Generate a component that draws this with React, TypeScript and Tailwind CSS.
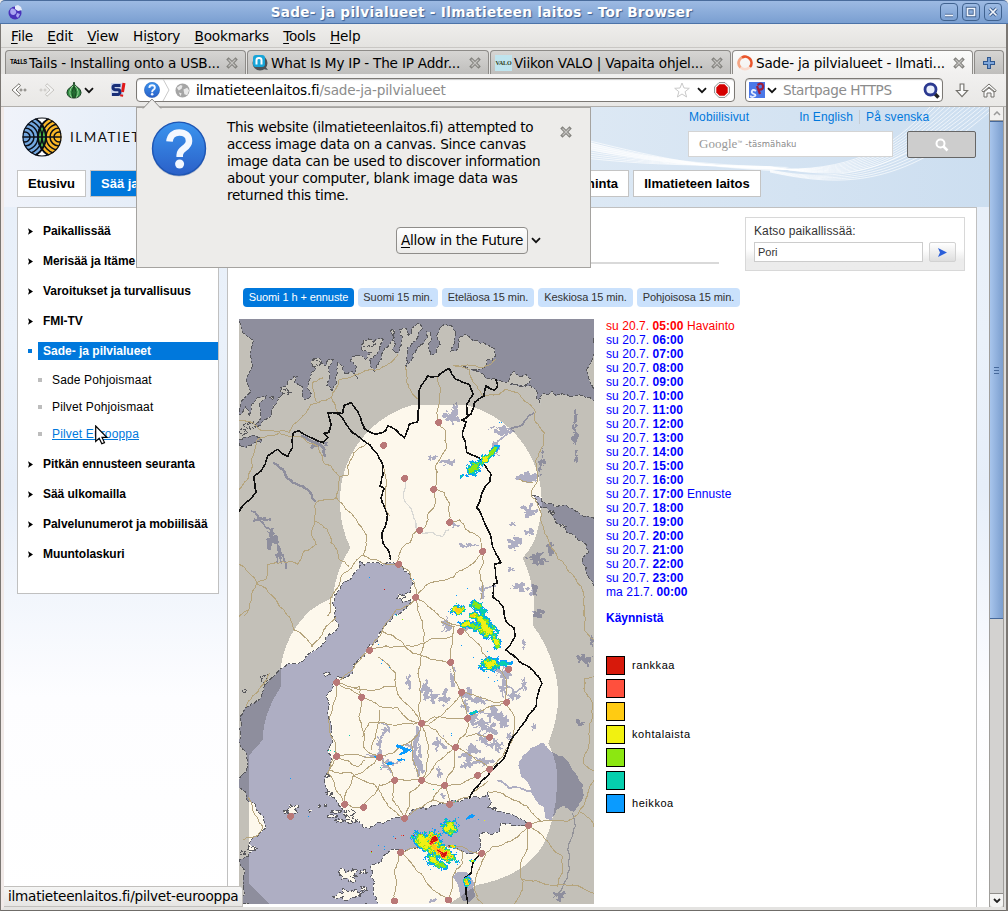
import React from "react";

type P = [number, number];

const seeded = (seed: number) => {
  let s = seed;
  return () => {
    s = (s * 1664525 + 1013904223) % 4294967296;
    return s / 4294967296;
  };
};

// "x,y x,y ..." -> points; the offset moves coordinates of the southern sheet
const pts = (s: string, dy = 0): P[] =>
  s.trim().split(/\s+/).map((p) => {
    const [x, y] = p.split(",").map(Number);
    return [x, y + dy] as P;
  });

const S = 882;

// Midpoint displacement gives the coast and the roads their irregular course
function rough(points: P[], amp: number, seed: number, closed = false, depth = 3): string {
  const rnd = seeded(seed);
  let list = closed ? [...points, points[0]] : points;
  for (let d = 0; d < depth; d++) {
    const out: P[] = [list[0]];
    for (let i = 1; i < list.length; i++) {
      const [ax, ay] = list[i - 1];
      const [bx, by] = list[i];
      const len = Math.hypot(bx - ax, by - ay);
      if (len > 7) {
        const k = (rnd() - 0.5) * amp * len;
        out.push([(ax + bx) / 2 - ((by - ay) / len) * k, (ay + by) / 2 + ((bx - ax) / len) * k]);
      }
      out.push(list[i]);
    }
    list = out;
  }
  return "M" + list.map(([x, y]) => `${x.toFixed(1)} ${y.toFixed(1)}`).join("L") + (closed ? "Z" : "");
}

function blob(cx: number, cy: number, rx: number, ry: number, seed: number, low = 0.4): string {
  const rnd = seeded(seed * 7919 + 13);
  const out: P[] = [];
  for (let i = 0; i < 20; i++) {
    const a = (i / 20) * Math.PI * 2;
    const r = low + rnd() * (1.25 - low);
    out.push([cx + Math.cos(a) * rx * r, cy + Math.sin(a) * ry * r]);
  }
  return rough(out, 0.8, seed, true, 2);
}

const northSea = pts(
  "9,9 1074,9 1074,255 1050,245 1030,236 1000,240 985,235 960,240 945,225 918,235 912,262 905,232 880,208 860,212 820,205 845,207 880,200 884,190 870,176 848,180 832,165 822,185 812,198 780,190 752,188 740,172 702,162 680,150 742,155 752,132 780,120 776,102 750,86 720,72 690,55 672,62 665,100 645,105 655,70 660,45 650,32 630,26 610,36 602,60 612,85 600,112 584,115 584,50 572,48 550,90 528,130 508,158 512,120 530,80 548,50 560,38 545,22 530,35 515,60 505,35 490,42 495,80 488,110 470,100 475,70 466,38 470,75 445,100 430,135 415,165 400,130 430,95 442,70 425,68 400,80 376,85 380,105 405,110 390,130 350,122 342,135 360,150 365,190 345,165 325,175 322,150 305,140 300,200 290,225 270,210 280,180 292,130 275,128 270,150 252,128 228,128 240,160 222,190 225,240 205,250 195,210 175,200 185,180 165,190 150,210 135,215 140,235 122,262 105,300 90,310 60,335 75,290 90,240 65,245 45,280 40,300 28,270 9,295",
);
const fjord = pts("9,372 40,362 70,365 78,378 50,385 30,395 9,390");
const baltic: P[] = [
  ...pts("370,735 385,748 400,738 440,748 470,740 500,750 520,775 525,830 508,833 488,838 500,858 525,850 515,870 480,895"),
  ...pts(
    "470,18 430,70 425,90 395,112 385,140 350,165 350,190 305,200 288,240 270,262 275,310 285,370 287,400 275,425 286,450 275,490 270,530 300,570 325,600 345,640 370,635 385,655 405,650 440,640 500,625 530,600 570,598 610,580 650,570 700,565 755,545 765,580 752,592 790,605 830,615 860,630 878,645 850,646 795,640 790,665 750,665 728,680 725,722 670,722 640,705 590,712 530,715 490,720 440,745 405,765 404,800 412,840 430,884 95,884 9,884 9,750 35,740 58,718 40,700 58,680 90,650 82,620 60,590 30,548 9,535 9,395 16,380 14,330 32,290 80,245 110,200 160,160 210,140 245,115 270,82 306,42 295,10",
    S,
  ),
  ...pts("300,880 290,860 312,820 325,795 350,778 365,760"),
];
const whiteSea = pts("888,538 930,562 960,572 1000,575 1040,600 1074,607 1074,808 1052,772 1040,745 1058,705 1040,675 1010,655 980,632 950,598 908,570");
const ladoga = pts("848,455 880,420 900,408 925,400 955,430 1000,460 1020,490 1042,525 1030,580 1012,605 985,588 960,605 948,635 932,628 922,590 885,540 855,500", S);
const peipus = pts("650,800 665,785 695,788 712,812 718,860 700,876 680,872 668,835", S);

const coverage =
  "M312 560A298 298 0 0 1 530 267H690A298 298 0 0 1 905 640Q895 690 860 725Q890 790 895 860L890 927Q935 985 955 1062Q985 1160 937 1282Q968 1340 963 1410Q960 1500 925 1580Q870 1680 722 1707L640 1764H100L40 1702V1317L80 1272Q82 1190 135 1112V1050Q150 950 225 882Q255 860 290 845Q300 760 343 695Q312 630 312 560Z";

const lakes: number[][] = [
  [645, 300, 28, 26], [662, 275, 13, 22], [640, 440, 28, 16], [585, 425, 22, 10], [800, 342, 36, 14], [780, 400, 13, 26],
  [700, 688, 32, 10], [655, 628, 16, 11], [835, 680, 22, 28], [880, 585, 24, 22], [880, 648, 16, 14], [905, 728, 34, 22],
  [945, 695, 13, 22], [830, 625, 16, 9], [825, 760, 13, 8], [850, 815, 42, 11], [895, 825, 18, 18], [1018, 300, 9, 24], [1019, 350, 8, 42],
  [1020, 420, 8, 20], [880, 480, 38, 16], [918, 435, 11, 36], [108, 670, 16, 36], [130, 715, 12, 28], [75, 610, 26, 7], [245, 385, 32, 10],
  [740, 830, 11, 24], [905, 893, 22, 13], [630, 925, 24, 24], [700, 935, 28, 13], [865, 985, 10, 18], [1045, 1033, 30, 20], [1030, 1222, 16, 12],
  [893, 1232, 10, 11], [862, 1105, 11, 24], [518, 1095, 8, 26], [570, 1120, 16, 28], [590, 1145, 28, 18], [625, 1150, 16, 28], [650, 1080, 8, 32],
  [700, 1140, 26, 24], [735, 1155, 26, 13], [690, 1170, 14, 20], [800, 1070, 28, 18], [800, 1120, 16, 28], [830, 1142, 16, 11], [770, 1195, 40, 24],
  [740, 1225, 34, 16], [800, 1215, 24, 26], [735, 1265, 24, 28], [770, 1285, 24, 18], [700, 1310, 32, 26], [740, 1335, 32, 18], [690, 1345, 18, 16],
  [610, 1280, 22, 26], [545, 1265, 10, 48], [542, 1330, 14, 44], [555, 1360, 12, 20], [450, 1240, 16, 13], [430, 1285, 10, 32], [420, 1320, 34, 10],
  [470, 1340, 34, 9], [445, 1352, 20, 18], [520, 1290, 24, 9], [610, 1370, 10, 22], [620, 1440, 10, 11], [790, 1295, 11, 24], [845, 1140, 10, 11],
  [820, 1260, 11, 13], [975, 1738, 30, 18], [590, 1755, 13, 9], [1067, 970, 8, 24], [885, 490, 22, 9], [760, 1240, 30, 20], [715, 1205, 16, 20],
];

const islands: number[][] = [
  [168, 1480, 20, 16], [150, 1487, 8, 6], [335, 1678, 34, 18], [380, 1668, 12, 7], [345, 1735, 46, 16], [385, 1718, 10, 8], [300, 1487, 14, 5], [290, 1500, 18, 5],
  [340, 1492, 18, 10], [345, 1512, 18, 9], [310, 1514, 11, 5], [48, 1598, 14, 8], [272, 1074, 10, 6], [494, 842, 13, 9], [85, 1088, 14, 12], [275, 1378, 8, 5],
  [20, 1610, 8, 6], [280, 1432, 9, 6], [222, 1485, 4, 4], [250, 1470, 4, 4], [268, 1468, 4, 4], [775, 1478, 6, 4], [25, 1125, 6, 5],
  [402, 80, 20, 14], [240, 140, 14, 12], [470, 45, 6, 8], [45, 330, 20, 10], [22, 350, 10, 10], [150, 228, 14, 12], [108, 245, 6, 5],
  [948, 590, 8, 6], [980, 630, 10, 6],
];

const roads: P[][] = [
  pts("605,182 612,240 607,318 630,345 632,390 612,430 598,450 596,520 598,560 575,595 572,625 550,643 530,655 522,680 498,695 485,735 487,745"),
  pts("592,520 625,530 641,560 640,618 670,612 690,640 735,670 739,706 742,740 730,770 738,830 735,850"),
  pts("739,706 700,750 650,785 600,795 560,820 538,843 535,800 520,765 487,745 430,735 382,718 350,750 320,775 285,845 285,880 275,900"),
  pts("400,378 370,395 345,430 335,480 312,482 300,545 240,560 235,615 225,650 240,685 205,705 185,745 95,745 90,790 62,802 25,900"),
  pts("9,745 62,802 110,840 155,900"),
  pts("300,545 330,580 365,620 390,655 380,718"),
  pts("235,615 275,640 285,680 310,730 340,752"),
  pts("312,482 285,450 262,440 245,390 190,360 130,350 60,375 45,430 35,490 9,520"),
  pts("9,315 50,320 75,345 160,350 200,300 225,265 285,245 310,190 350,180 430,160 465,140 485,115"),
  pts("245,260 230,200 262,185"), pts("285,245 305,290"), pts("508,150 512,200 545,250"),
  pts("650,148 700,160 712,200 725,215 740,240 790,235 805,222 845,230 865,255 895,280 900,320 925,350 910,410 900,450 905,480 885,540 915,590 925,650 950,700 990,750 1035,810 1042,900"),
  pts("650,148 740,155 780,130"), pts("440,445 450,530 460,600"), pts("892,500 850,490"),
  pts("150,10 175,60 228,110 262,60 300,20", S), pts("9,20 35,0", S),
  pts("538,-40 545,0 560,50 560,115 548,180 555,260 556,340", S),
  pts("538,-40 590,0 610,20 672,45 710,85 740,130 770,160 800,190 812,240 810,277 760,290 695,325", S),
  pts("538,-30 480,0 440,60 400,120 350,180 302,218 350,232 480,230 530,300 556,340", S),
  pts("440,65 490,90 530,130 570,140 643,157 650,100 655,50 615,35", S),
  pts("643,157 655,200 677,247 690,290 695,325 690,370 658,412 655,470 626,525 640,583", S),
  pts("400,115 500,110 560,100 590,85 650,80", S),
  pts("425,140 480,190 480,230", S), pts("302,218 290,300 280,360 300,438 275,490 300,540 326,583 382,592", S),
  pts("302,218 376,262 430,290 485,292 520,330 556,340", S), pts("376,262 370,230 350,232", S),
  pts("376,262 368,320 380,360 382,410 430,442 475,510 470,570 505,625", S),
  pts("556,340 510,340 400,338 380,380", S), pts("300,438 430,442 470,430 540,380 556,340", S),
  pts("556,340 575,400 578,440 556,510 520,550 505,625", S), pts("556,340 610,320 695,325", S),
  pts("556,340 600,360 658,412 600,460 556,510 475,510 430,525 382,592", S),
  pts("430,442 350,500 326,583", S), pts("300,438 280,480 350,490 410,520 440,560 470,600 505,625", S),
  pts("677,247 740,265 811,277 835,320 830,380 800,440 760,478 725,496 680,520 626,525 556,510", S),
  pts("658,412 720,450 760,478", S), pts("760,382 720,370 690,380", S), pts("505,625 560,590 590,570 640,583 700,560 755,515", S),
  pts("677,247 630,300 580,340", S), pts("590,570 600,550 626,525", S), pts("525,390 530,450 556,510", S), pts("430,300 420,370 405,420", S),
  pts("755,545 800,550 850,575 890,610 915,635 878,645 830,690 770,710 740,750 720,800 715,840 740,882", S),
  pts("915,635 990,635 1030,605 1060,530 1074,510", S), pts("878,645 862,740 860,840 835,882", S),
  pts("878,645 940,700 980,740 965,830", S), pts("862,808 940,825 1074,850", S), pts("1030,605 1060,625 1074,650", S),
  pts("1074,200 1045,205 1045,240 1070,290 1060,400 1042,460 1074,480", S), pts("493,727 475,780 480,830 475,880", S),
  pts("493,727 540,780 590,840 637,870 650,800 680,760 680,725 640,710", S), pts("493,727 560,710 640,712 736,730", S),
  pts("1045,0 1045,60 1074,90", S), pts("20,690 60,680 80,650 50,600 35,560", S), pts("30,290 75,230 100,190", S), pts("300,438 365,470 385,450", S),
];

const borders: P[][] = [
  pts("9,588 60,530 55,480 75,465 95,420 125,400 155,422 170,395 172,350 190,345 215,360 262,380 275,365 265,352 278,350 286,325 276,290 302,290 320,292 325,268 345,260 360,280 385,338 420,355 448,345 455,330 480,342 505,364 520,325 545,318 548,230 575,180 605,182 640,158 660,190 700,205 712,235 692,265 692,295 705,295 715,260 745,240 750,210 775,222 785,210 780,190"),
  pts("302,290 345,345 400,385 440,445 432,510 445,518 435,545 455,598 438,650 440,680 455,700 463,733"),
  [
    ...pts("705,295 678,312 690,317 680,360 692,408 728,425 765,475 762,495 722,575 755,640 795,740 775,745 785,800 772,805 772,845 800,870"),
    ...pts("803,0 810,35 835,55 838,75 810,120 850,155 890,180 918,220 900,290 870,330 810,430 770,480 735,515 700,568", S),
  ],
  pts("728,736 715,750 705,790 685,805 690,850 695,882", S),
];

const cities: P[] = [
  ...pts("607,319 442,388 505,487 592,520 550,643 640,619 739,706 487,745 538,844"),
  ...pts("673,64 400,121 643,157 817,178 301,217 376,262 676,247 811,277 694,325 556,340 760,382 658,412 301,439 430,442 475,511 556,511 760,478 725,496 626,526 325,583 382,592 163,619 505,625 640,583 877,646 493,727 736,730 475,873 637,870", S),
];

const RAIN = ["#0a9bff", "#08cfae", "#8ce614", "#f0f014", "#ffc814", "#ff503c", "#d2140a"];

// x, y, rx, ry, rotation in degrees, strongest class
const cells: number[][] = [
  [745, 428, 20, 13, -48, 3], [712, 455, 28, 18, -50, 2], [768, 405, 22, 11, -55, 2], [782, 392, 14, 5, -30, 0], [676, 480, 9, 5, -50, 1],
  [665, 880, 23, 15, 0, 4], [722, 868, 22, 15, 30, 2], [740, 884, 16, 8, 20, 1], [708, 898, 16, 9, 0, 4],
  [688, 923, 20, 12, 0, 3], [735, 910, 34, 16, 40, 3], [750, 938, 38, 24, 35, 3], [715, 930, 18, 12, 30, 2], [780, 975, 18, 13, 60, 3], [780, 990, 12, 8, 0, 2],
  [762, 1042, 32, 20, -5, 3], [800, 1042, 24, 9, 0, 1], [638, 1532, 24, 24, -20, 3], [652, 1589, 9, 6, 0, 4],
  [556, 1570, 32, 22, 30, 3], [565, 1585, 28, 18, 20, 3], [605, 1603, 60, 22, 30, 4], [590, 1568, 24, 24, 20, 6], [622, 1612, 32, 16, 35, 6],
  [590, 1632, 24, 16, 30, 3], [616, 1648, 18, 11, 30, 2],
  [692, 1695, 11, 16, 20, 4], [705, 1634, 10, 4, 0, 3], [712, 1189, 12, 5, -20, 1], [500, 1296, 26, 5, 20, 0], [505, 1306, 22, 4, -25, 0], [462, 1340, 12, 3, 0, 0],
  [703, 1500, 16, 5, -25, 0], [492, 1330, 10, 4, 0, 0], [420, 1322, 10, 3, 0, 0],
];

const specks: number[][] = [
  [398, 784, 0], [444, 818, 6], [532, 788, 0], [692, 815, 0], [790, 317, 0], [795, 319, 0], [790, 389, 0], [660, 836, 0], [660, 860, 1], [480, 898, 1], [478, 893, 0], [498, 908, 2],
  [425, 985, 0], [437, 1032, 0], [435, 1040, 0], [460, 1054, 0], [676, 987, 0], [712, 1024, 0], [752, 1004, 0], [757, 1082, 0], [775, 1095, 0], [783, 1092, 0],
  [338, 1256, 1], [644, 1257, 0], [646, 1250, 0], [162, 1387, 0], [216, 1499, 0], [432, 1352, 1], [590, 1420, 1], [478, 1567, 6], [494, 1556, 5], [502, 1556, 6], [470, 1561, 0],
  [425, 1587, 0], [444, 1591, 0], [445, 1600, 0], [404, 1604, 6], [406, 1607, 2], [745, 1513, 3], [658, 1506, 0], [667, 1504, 0], [553, 1554, 5], [530, 1558, 6], [588, 1537, 0],
  [605, 1551, 4], [275, 1301, 1], [283, 1301, 1], [295, 1305, 1], [582, 1660, 0], [656, 1454, 1], [640, 1591, 6], [725, 1508, 0],
];

// Each 3x3 pixel keeps the strongest class of the cells that overlap it
function rainPixels(): string[] {
  const grid = new Map<string, number>();
  const put = (x: number, y: number, c: number) => {
    const key = `${Math.round(x / 3) * 3} ${Math.round(y / 3) * 3}`;
    grid.set(key, Math.max(grid.get(key) ?? 0, c));
  };
  cells.forEach(([cx, cy, rx, ry, rot, max], n) => {
    const rnd = seeded(n * 977 + 5);
    const a = (rot * Math.PI) / 180;
    const R = Math.max(rx, ry) + 6;
    const ph = rnd() * 6;
    for (let y = -R; y <= R; y += 3)
      for (let x = -R; x <= R; x += 3) {
        const u = (x * Math.cos(a) + y * Math.sin(a)) / rx;
        const v = (-x * Math.sin(a) + y * Math.cos(a)) / ry;
        const wave = Math.sin(x / 4.5 + ph) * Math.cos(y / 5 + ph * 2) * 0.26;
        const d = Math.hypot(u, v) + (rnd() - 0.5) * 0.4 + wave;
        if (d < 1) put(cx + x, cy + y, Math.max(0, Math.min(max, Math.floor((1 - d) * (max + 3)))));
      }
  });
  specks.forEach(([x, y, c]) => put(x, y, c));
  const out = RAIN.map(() => "");
  grid.forEach((c, key) => {
    out[c] += `M${key}h3v3h-3z`;
  });
  return out;
}

function RadarMap() {
  const north = rough(northSea, 0.45, 3, true);
  const sea = rough(baltic, 0.4, 11, true);
  const white = rough(whiteSea, 0.45, 21, true);
  const isl = islands.map(([x, y, a, b], i) => blob(x, y, a, b, i + 200)).join("");
  return (
    <svg viewBox="9 9 1065 1755" className="block h-[585px] w-[355px] shrink-0" shapeRendering="crispEdges">
      <rect x="9" y="9" width="1065" height="1755" fill="#fdf8ec" />
      <g fill="#aeaec3">
        {lakes.map(([x, y, a, b], i) => (
          <path key={i} d={blob(x, y, a, b, i + 1, 0.12)} />
        ))}
        <path d={rough(ladoga, 0.3, 31, true)} />
        <path d={rough(peipus, 0.15, 32, true)} />
      </g>
      <g fill="none" stroke="#aeaec3" strokeWidth="5">
        <path d={rough(pts("112,440 150,480 200,510 238,558"), 0.3, 40)} strokeWidth="7" />
        <path d={rough(pts("770,400 800,365 820,340 870,310 895,290"), 0.3, 41)} />
        <path d={rough(pts("785,510 820,535 870,542 910,548", S), 0.3, 42)} />
        <path d={rough(pts("45,585 80,620 105,660 125,700 150,760"), 0.4, 43)} />
        <path d={rough(pts("195,362 225,375 265,400 270,420"), 0.4, 44)} strokeWidth="8" />
        <path d={rough(pts("740,850 745,820 780,810"), 0.4, 45)} />
        <path d={rough(pts("770,180 800,195 830,250 860,225", S), 0.5, 48)} />
        <path d={rough(pts("425,340 460,355 430,390 425,440 465,490", S), 0.5, 49)} />
        <path d={rough(pts("545,350 535,400 548,450 545,500", S), 0.5, 50)} strokeWidth="9" />
      </g>
      <g fill="none" stroke="#d8d8d4" strokeWidth="3.5">
        <path d={rough(pts("505,487 502,545 530,590 540,635 560,652 620,662 640,640"), 0.25, 46)} />
        <path d={rough(pts("1010,610 1018,650 995,720 980,830 960,860", S), 0.25, 47)} stroke="#b4b4bc" />
      </g>
      <g fill="#aeaec3" stroke="#fffdf4" strokeWidth="6">
        <path d={north} /><path d={rough(fjord, 0.4, 8, true)} /><path d={sea} /><path d={white} />
      </g>
      <g fill="#aeaec3" stroke="#5c5c62" strokeWidth="3" strokeDasharray="13 4 7 6">
        <path d={north} /><path d={rough(fjord, 0.4, 8, true)} /><path d={sea} /><path d={white} />
        <path d={isl} fill="#fdf8ec" />
      </g>
      <path d={`M9 9H1074V1764H9Z${coverage}`} fill="#505050" fillOpacity=".33" fillRule="evenodd" />
      <g fill="none" stroke="#b5a47c" strokeWidth="3">
        {roads.map((r, i) => (
          <path key={i} d={rough(r, 0.22, i + 60)} />
        ))}
      </g>
      <g fill="none" stroke="#111" strokeWidth="4.8">
        {borders.map((r, i) => (
          <path key={i} d={rough(r, 0.14, i + 90)} />
        ))}
      </g>
      {rainPixels().map((d, i) => (
        <path key={i} d={d} fill={RAIN[i]} />
      ))}
      <g fill="#b97877">
        {cities.map(([x, y], i) => (
          <path key={i} d={`M${x - 4} ${y - 10}h9l6 6v8l-6 6h-9l-6 -6v-8z`} />
        ))}
      </g>
    </svg>
  );
}

const CloseX = () => (
  <svg viewBox="0 0 12 12" className="h-3 w-3 shrink-0">
    <path d="M2.5 2.5 9.5 9.5M9.5 2.5 2.5 9.5" stroke="#83827e" strokeWidth="3.2" strokeLinecap="square" />
    <path d="M2.5 2.5 9.5 9.5M9.5 2.5 2.5 9.5" stroke="#c4c3c0" strokeWidth="1.2" />
  </svg>
);

const Chevron = () => (
  <svg viewBox="0 0 10 7" className="h-[7px] w-[10px] shrink-0">
    <path d="M1 1.2 5 5.2 9 1.2" fill="none" stroke="#111" strokeWidth="1.8" />
  </svg>
);

const Question = ({ cls }: { cls: string }) => (
  <svg viewBox="0 0 56 56" className={cls}>
    <defs>
      <linearGradient id="qg" x1="0" y1="0" x2="0" y2="1">
        <stop offset="0" stopColor="#3a94ee" />
        <stop offset="1" stopColor="#2b60c8" />
      </linearGradient>
    </defs>
    <circle cx="28" cy="28.6" r="27" fill="#8a98b4" opacity=".6" />
    <circle cx="28" cy="27.6" r="26.5" fill="url(#qg)" stroke="#1d55b4" strokeWidth="1.4" />
    <path d="M18.500 20.500c.5-5.500 4-9 9.700-9 6 0 9.800 3.400 9.800 8.400 0 7.400-9.300 7.600-9.300 14v2" fill="none" stroke="#f4f8ff" strokeWidth="6.600" />
    <circle cx="28.600" cy="43" r="4.500" fill="#f4f8ff" />
  </svg>
);

const Tab = ({ icon, children, cls }: { icon: React.ReactNode; children: string; cls: string }) => (
  <div className={`flex h-[24px] items-center rounded-t-[4px] border border-b-0 border-[#8d8b88] pl-1 pr-[7px] pt-px ${cls}`}>
    <span className="flex w-[19px] shrink-0 items-center">{icon}</span>
    <span className="flex-1 whitespace-pre text-[13.600px] tracking-[-.2px]">{children}</span>
    <CloseX />
  </div>
);

const idle = "bg-gradient-to-b from-[#d6d5d3] to-[#bfbebc]";

const WinButton = ({ d }: { d: string }) => (
  <span className="flex h-[18px] w-[18px] items-center justify-center rounded-[4px] border border-[#40628f] bg-gradient-to-b from-[#9dbbe4] to-[#7ba0d2]">
    <svg viewBox="0 0 12 12" className="h-3 w-3">
      <path d={d} fill="none" stroke="#3e5f8e" strokeWidth="3.400" />
      <path d={d} fill="none" stroke="#f2f6fc" strokeWidth="1.700" />
    </svg>
  </span>
);

const Menu = ({ a = "", u, b }: { a?: string; u: string; b: string }) => (
  <span>
    {a}
    <span className="underline decoration-1 underline-offset-2">{u}</span>
    {b}
  </span>
);

const Side = ({ children }: { children: string }) => (
  <div className="flex h-[30px] items-center pl-[10px] text-black">
    <svg viewBox="0 0 5 7" className="mr-[10px] h-[7px] w-[5px]">
      <path d="M0 .2 5 3.500 0 6.800 1 3.500Z" fill="#000" />
    </svg>
    <b className="whitespace-nowrap tracking-[-.03px]">{children}</b>
  </div>
);

const Sub = ({ children, cls = "" }: { children: string; cls?: string }) => (
  <div className="flex h-[27px] items-center pl-5">
    <span className="mr-[10px] h-1 w-1 bg-[#bdbdbd]" />
    <span className={`tracking-[.15px] ${cls}`}>{children}</span>
  </div>
);

const Logo = () => (
  <svg viewBox="0 0 40 40" className="h-10 w-10">
    <defs>
      <clipPath id="disc"><circle cx="20" cy="20" r="19.500" /></clipPath>
    </defs>
    <g clipPath="url(#disc)" fill="none" stroke="#0b0f18" strokeWidth="1.500">
      <rect width="40" height="40" fill="#fff" stroke="none" />
      <circle cx="3" cy="20" r="21" fill="#72a7e0" />
      <circle cx="37" cy="20" r="21" fill="#fbb726" />
      <path d="M20 8Q28 20 20 32Q12 20 20 8Z" fill="#4cb848" />
      {[5, 9, 13, 17, 21].map((r) => (
        <React.Fragment key={r}>
          <circle cx="3" cy="20" r={r} /><circle cx="37" cy="20" r={r} />
        </React.Fragment>
      ))}
      <path d="M0 20H40" />
    </g>
    <circle cx="20" cy="20" r="19" fill="none" stroke="#0b0f18" strokeWidth="1.200" />
  </svg>
);

const hours = ["05", "06", "07", "08", "09", "10", "11", "12", "13", "14", "15", "16", "17", "18", "19", "20", "21", "22", "23", "00"];

const legend: [string, string][] = [
  ["bg-[#d7190b]", "rankkaa"], ["bg-[#ff503d]", ""], ["bg-[#ffcb12]", ""], ["bg-[#f1f111]", "kohtalaista"],
  ["bg-[#8ce711]", ""], ["bg-[#05cfae]", ""], ["bg-[#0a9bff]", "heikkoa"],
];

const Pill = ({ children, cls }: { children: string; cls: string }) => (
  <span className={`flex h-[19px] items-center justify-center whitespace-nowrap rounded-[4px] pb-px text-[11px] tracking-[-.08px] ${cls}`}>{children}</span>
);

const Waves = () => (
  <svg viewBox="590 107 399 100" className="absolute right-0 top-0 h-[100px] w-[399px]">
    <g fill="none" stroke="#fff" strokeOpacity=".75" strokeWidth=".9">
      {[0, 1, 2, 3, 4, 5, 6, 7, 8].map((i) => (
        <path key={i} d={`M590 ${141 + i * 2.2}C660 ${158 + i} 700 ${167 - i * 0.3} 770 ${169 - i * 0.3}C850 ${172 + i * 1.2} 890 ${150 + i * 3} ${930 + i * 5} 107`} />
      ))}
      {[0, 1, 2, 3, 4].map((i) => (
        <path key={i} d={`M770 ${170 + i * 0.5}C${830 + i * 4} ${182 + i * 1.6} ${890 + i * 4} ${178 + i * 2} ${975 + i * 5} 107`} />
      ))}
    </g>
    <path d="M590 142C640 157 690 164 790 167L770 171C700 166 640 161 590 150Z" fill="#fff" fillOpacity=".6" />
  </svg>
);

export default function App() {
  return (
    <div className="relative flex h-[911px] w-[1008px] flex-col overflow-hidden bg-[#edecea] font-['DejaVu_Sans',sans-serif] text-[13.33px] leading-4 text-black">
      <div className="flex h-[24px] shrink-0 items-center rounded-t-[5px] border-b border-t border-b-[#4c73a8] border-t-[#4a6c9c] bg-gradient-to-b from-[#9dbae3] to-[#7a9fd1] pl-[7px] pr-[6px]">
        <svg viewBox="0 0 16 16" className="h-4 w-4">
          <circle cx="8" cy="9" r="6.500" fill="#4932ba" />
          <path d="M4 5c2-1 4 0 5 2s-1 4-3 4-4-3-2-6ZM10 9l3 1-2 4-2-2Z" fill="#a9a5f0" />
          <path d="M8 2l3-1 3 2 1 3-4 1-3-2Z" fill="#e8ecfa" />
        </svg>
        <div className="flex-1 whitespace-nowrap text-center text-[13.600px] font-bold tracking-[.31px] text-white [text-shadow:1px_1px_1px_#3c5f93]">
          Sade- ja pilvialueet - Ilmatieteen laitos - Tor Browser
        </div>
        <div className="flex gap-1">
          <WinButton d="M2 9.500H10" />
          <WinButton d="M2.500 2.500H9.500V9.500H2.500Z" />
          <WinButton d="M2.500 2.500 9.500 9.500M9.500 2.500 2.500 9.500" />
        </div>
      </div>

      <div className="flex min-h-0 flex-1 flex-col border-l border-r-[2px] border-[#7b7773]">
        <div className="flex h-[24px] shrink-0 items-center gap-[14.300px] border-b border-[#c9c7c4] bg-gradient-to-b from-[#efeeec] to-[#e4e3e0] pl-[10px] text-[13.600px] tracking-[-.18px]">
          <Menu u="F" b="ile" />
          <Menu u="E" b="dit" />
          <Menu u="V" b="iew" />
          <Menu a="Hi" u="s" b="tory" />
          <Menu u="B" b="ookmarks" />
          <Menu u="T" b="ools" />
          <Menu u="H" b="elp" />
        </div>

        <div className="flex h-[26px] shrink-0 items-end gap-px bg-[#e6e5e3] pl-1">
          <Tab cls={`w-[241px] ${idle}`} icon={<span className="font-['Liberation_Mono',monospace] text-[6.500px] font-bold leading-none tracking-[-.6px]">TAiLS</span>}>Tails - Installing onto a USB...</Tab>
          <Tab
            cls={`w-[242px] ${idle}`}
            icon={
              <svg viewBox="0 0 16 16" className="h-4 w-4">
                <circle cx="8" cy="8" r="7.500" fill="#4d5257" />
                <path d="M13 11l3 4-5-1Z" fill="#4d5257" />
                <rect x="1" y="0" width="12" height="12" rx="3" fill="#18a5d8" />
                <path d="M4.500 9.500V5q0-2 2.500-2T9.500 5V9.500" stroke="#fff" strokeWidth="2" fill="none" />
              </svg>
            }
          >
            What Is My IP - The IP Addr...
          </Tab>
          <Tab cls={`w-[241px] ${idle}`} icon={<span className="flex h-4 w-[17px] items-center justify-center bg-[#bfe4ee] font-['Liberation_Serif',serif] text-[6px] font-bold leading-none tracking-[-.2px] text-[#33401a]">VALO</span>}>Viikon VALO | Vapaita ohjel...</Tab>
          <Tab
            cls="w-[241px] bg-gradient-to-b from-[#fbfbfa] to-[#f1f0ef]"
            icon={
              <svg viewBox="0 0 16 16" className="h-4 w-4" fill="none" strokeWidth="2.600">
                <circle cx="8" cy="8" r="6.300" stroke="#f9d9cc" />
                <path d="M3.500 12.500A6.300 6.300 0 0 1 8 1.700" stroke="#f4a583" />
                <path d="M5 2.500A6.300 6.300 0 0 1 13 12" stroke="#e9552c" />
              </svg>
            }
          >
            Sade- ja pilvialueet - Ilmati...
          </Tab>
          <div className={`flex h-[24px] w-[30px] items-center justify-center rounded-t-[4px] border border-b-0 border-[#8d8b88] ${idle}`}>
            <svg viewBox="0 0 12 12" className="h-3 w-3">
              <path d="M6 0V12M0 6H12" stroke="#2f578f" strokeWidth="4" />
              <path d="M6 1V11M1 6H11" stroke="#7ea6da" strokeWidth="1.800" />
            </svg>
          </div>
        </div>

        <div className="flex h-[33px] shrink-0 items-center border-b border-[#b1afac] bg-gradient-to-b from-[#f1f0ef] to-[#e9e8e6] pl-[10px]">
          <svg viewBox="0 0 16 14" className="h-[14px] w-4" fill="#fff" stroke="#77756f">
            <path d="M8 .7 1 7l7 6.300 1.500-2L5 7l4.500-4.300Z" />
            <circle cx="10" cy="7" r="1" /><circle cx="14" cy="7" r="1" />
          </svg>
          <svg viewBox="0 0 16 14" className="ml-3 h-[14px] w-4" fill="#f4f4f3" stroke="#c6c4c0">
            <path d="M8 .7 15 7l-7 6.300-1.500-2L11 7 6.500 2.700Z" />
            <circle cx="2" cy="7" r="1" /><circle cx="6" cy="7" r="1" />
          </svg>
          <svg viewBox="0 0 16 18" className="ml-[11px] h-[17px] w-4">
            <path d="M8 0Q8 3 11 5Q16 8 15.500 11.500Q14.500 17 8 17T.5 11.500Q0 8 5 5Q8 3 8 0Z" fill="#2f8b42" stroke="#1b3c22" />
            <path d="M7 4Q1 10 5.500 16.500M9 4Q15 10 10.500 16.500" stroke="#a3dca0" fill="none" />
            <path d="M8 3V17M7.500 5Q4.500 11 7 17M8.500 5Q11.500 11 9 17" stroke="#143d1b" strokeWidth=".9" fill="none" />
          </svg>
          <span className="ml-[2px] flex"><Chevron /></span>
          <svg viewBox="0 0 16 16" className="ml-4 h-4 w-4">
            <path d="M1 1H13V14H1Z" fill="#c9d4ec" />
            <path d="M10.500 3.500H5Q3 3.500 3 5.500T5 7.800H8Q10 8 10 10T8 12.500H2" fill="none" stroke="#182e78" strokeWidth="3" />
            <path d="M14 1 12.500 10M11.800 12.500 11.500 14.500" stroke="#e01818" strokeWidth="3" />
          </svg>
          <div className="ml-[10px] flex h-6 w-[599px] items-center rounded-[4px] border border-[#7c7975] bg-white pl-[7px] shadow-[inset_0_1px_1px_#ccc]">
            <Question cls="h-4 w-4" />
            <svg viewBox="0 0 8 22" className="ml-[2px] h-[22px] w-2" fill="none" stroke="#c9c9c9"><path d="M1 0 7 11 1 22" /></svg>
            <svg viewBox="0 0 16 16" className="ml-[5px] h-[15px] w-[15px]">
              <circle cx="8" cy="8" r="7.500" fill="#a5a5a5" />
              <path d="M2 5l4-3 2 1-1 3-3 2ZM9 7l4-2 2 3-2 5-3-1ZM4 10l3 1-1 3Z" fill="#e9e9e9" />
            </svg>
            <span className="ml-[6px] flex-1 text-[13.600px] tracking-[-.17px]">ilmatieteenlaitos.fi<span className="text-[#8c8c8c]">/sade-ja-pilvialueet</span></span>
            <svg viewBox="0 0 16 16" className="h-4 w-4"><path d="M8 1l2 5 5.300.3-4.200 3.400 1.500 5.300L8 12l-4.600 3 1.500-5.300L.7 6.300 6 6Z" fill="#fff" stroke="#c9c9c9" /></svg>
            <span className="ml-[7px] mr-[7px] flex"><Chevron /></span>
            <svg viewBox="0 0 16 16" className="mr-1 h-4 w-4">
              <path d="M5 .6h6L15.400 5v6L11 15.400H5L.6 11V5Z" fill="#fff" stroke="#8c8c8c" />
              <path d="M5.500 2.300h5L13.700 5.500v5l-3.200 3.200h-5L2.300 10.500v-5Z" fill="#d40000" />
            </svg>
          </div>
          <div className="ml-[10px] flex h-6 w-[198px] items-center rounded-[4px] border border-[#7c7975] bg-white pl-[3px] shadow-[inset_0_1px_1px_#ccc]">
            <svg viewBox="0 0 16 16" className="h-4 w-4">
              <rect width="16" height="16" fill="#4b78e8" />
              <path d="M7 9Q4 7 3 9T5 12T5 14.500 1.500 13.500" stroke="#e6eeff" strokeWidth="1.800" fill="none" />
              <path d="M8 4l3 8M8.500 3q5-3 5.500 1t-4 3.500" stroke="#9e1d3a" strokeWidth="2.200" fill="none" />
            </svg>
            <span className="ml-[2px] flex"><Chevron /></span>
            <span className="ml-[6px] flex-1 whitespace-nowrap text-[13.600px] tracking-[-.42px] text-[#8c8c8c]">Startpage HTTPS</span>
            <svg viewBox="0 0 17 17" className="mr-[2px] h-[17px] w-[17px]">
              <path d="M11 11l4.500 4.500" stroke="#222" strokeWidth="3.500" />
              <circle cx="7.500" cy="7.500" r="5.500" fill="#e9effc" stroke="#2b3990" strokeWidth="2.800" />
            </svg>
          </div>
          <svg viewBox="0 0 14 16" className="ml-3 h-[15px] w-[14px]"><path d="M5 1h4v7h4l-6 6.500L1 8h4Z" fill="#fafafa" stroke="#73716c" strokeWidth="1.200" /></svg>
          <svg viewBox="0 0 16 15" className="ml-3 h-[15px] w-4" fill="#fafafa" stroke="#73716c">
            <path d="M8 1 .8 7.500 2 9l6-5 6 5 1.200-1.500Z" /><path d="M3 9v5h3v-4h4v4h3V9L8 5Z" />
          </svg>
        </div>

        <div className="flex min-h-0 flex-1 border-b-[3px] border-l-[3px] border-r-2 border-b-[#e4e3e1] border-l-[#f1eae8] border-r-[#dedddb]">
          <div className="relative flex min-w-0 flex-1 flex-col bg-[linear-gradient(to_bottom,#e6eef8_0,#eaf1fa_230px,#e6eef9_380px,#fdfdff_590px,#ffffff_100%)] font-['Liberation_Sans',sans-serif] text-[12px] leading-[14px]">
            <div className="relative flex h-[100px] shrink-0 flex-col bg-[linear-gradient(to_right,#f0f3fa_0,#e4edf8_15%,#dce8f4_60%,#ccdef0_100%)]">
              <Waves />
              <div className="relative flex h-[63px]">
                <div className="flex items-start pl-[18px] pt-[10px]">
                  <Logo />
                  <span className="ml-[8px] mt-[13px] font-['Lato',sans-serif] text-[13.500px] tracking-[1.500px] text-[#111]">ILMATIET</span>
                </div>
                <div className="ml-auto mr-[13px] w-[288px] text-[#0078dc]">
                  <div className="flex h-[24px] items-center pb-[4px] tracking-[.12px]">
                    <span className="ml-px">Mobiilisivut</span>
                    <span className="ml-[50px] border-r border-[#c5ccd3] pr-[6px]">In English</span>
                    <span className="ml-[6px]">På svenska</span>
                  </div>
                  <div className="flex justify-between">
                    <div className="flex h-[26px] w-[205px] items-center border border-[#d4d4d4] bg-white pl-[10px] text-[#8a8a8a]">
                      <span className="font-['Liberation_Serif',serif] text-[13px] text-[#999]">Google</span>
                      <span className="mb-1 text-[5px]">™</span>
                      <span className="ml-[3px] font-['DejaVu_Sans',sans-serif] text-[8.500px] tracking-[.1px]">-täsmähaku</span>
                    </div>
                    <div className="flex h-[27px] w-[69px] items-center justify-center rounded-[2px] border border-[#666] bg-[#cdcdcd]">
                      <svg viewBox="0 0 14 14" className="h-[14px] w-[14px]" fill="none" stroke="#fff"><circle cx="5.500" cy="5.500" r="4" strokeWidth="2" /><path d="M8.500 8.500 12.500 12.500" strokeWidth="2.500" /></svg>
                    </div>
                  </div>
                </div>
              </div>
              <div className="relative flex pl-[13px] text-[13px] font-bold text-black">
                <span className="flex h-[27px] w-[69px] items-center justify-center border border-[#c4c4c4] bg-white">Etusivu</span>
                <span className="ml-1 flex h-[27px] w-[100px] items-center border border-[#c4c4c4] bg-[#0078dc] pl-[10px] text-white">Sää ja</span>
                <span className="ml-[339px] flex h-[27px] w-[100px] items-center justify-end border border-[#c4c4c4] bg-white pr-[10px]">minta</span>
                <span className="ml-1 flex h-[27px] w-[128px] items-center justify-center border border-[#c4c4c4] bg-white">Ilmatieteen laitos</span>
              </div>
            </div>

            <div className="relative flex min-h-0 flex-1 pl-[13px]">
              <div className="h-[387px] w-[202px] shrink-0 border border-[#c0c0c0] bg-white pt-2">
                <Side>Paikallissää</Side>
                <Side>Merisää ja Itäme</Side>
                <Side>Varoitukset ja turvallisuus</Side>
                <Side>FMI-TV</Side>
                <div className="flex h-[30px] items-center pl-[10px]">
                  <span className="mr-[6px] h-1 w-1 bg-[#0078dc]" />
                  <b className="flex h-[18px] flex-1 items-center bg-[#0078dc] pl-[5px] text-white">Sade- ja pilvialueet</b>
                </div>
                <div className="pb-[2px]">
                  <Sub>Sade Pohjoismaat</Sub>
                  <Sub>Pilvet Pohjoismaat</Sub>
                  <Sub cls="text-[#0078dc] underline">Pilvet Eurooppa</Sub>
                </div>
                <Side>Pitkän ennusteen seuranta</Side>
                <Side>Sää ulkomailla</Side>
                <Side>Palvelunumerot ja mobiilisää</Side>
                <Side>Muuntolaskuri</Side>
              </div>

              <div className="ml-2 flex w-[750px] shrink-0 flex-col border border-b-0 border-[#c0c0c0] bg-white pl-[11px]">
                <div className="flex h-[80px] shrink-0 items-start">
                  <div className="ml-1 mt-[54px] h-[2px] w-[476px] bg-[#d9d9d9]" />
                  <div className="ml-[26px] mt-[9px] h-[54px] w-[220px] border border-[#d8d8d8] bg-gradient-to-b from-white from-60% to-[#ececec] to-80% pl-2 pt-[6px] text-[#333]">
                    <span className="tracking-[.12px]">Katso paikallissää:</span>
                    <div className="mt-[4px] flex">
                      <span className="flex h-5 w-[169px] items-center border border-[#ccc] bg-white pl-[3px] text-[11px]">Pori</span>
                      <span className="ml-[6px] flex h-5 w-[27px] items-center justify-center rounded-[2px] border border-[#d2d2d2] bg-gradient-to-b from-white to-[#dedede]">
                        <svg viewBox="0 0 9 9" className="h-[9px] w-[9px]"><path d="M0 0 9 4.500 0 9 2 4.500Z" fill="#2b5fd9" /></svg>
                      </span>
                    </div>
                  </div>
                </div>
                <div className="ml-1 flex h-[31px] shrink-0 gap-1 text-[#333]">
                  <Pill cls="w-[111px] bg-[#0078dc] text-white">Suomi 1 h + ennuste</Pill>
                  <Pill cls="w-[80px] bg-[#cae1fc]">Suomi 15 min.</Pill>
                  <Pill cls="w-[92px] bg-[#cae1fc]">Eteläosa 15 min.</Pill>
                  <Pill cls="w-[95px] bg-[#cae1fc]">Keskiosa 15 min.</Pill>
                  <Pill cls="w-[103px] bg-[#cae1fc]">Pohjoisosa 15 min.</Pill>
                </div>
                <div className="flex">
                  <RadarMap />
                  <div className="ml-3 text-[#0000ff]">
                    {hours.map((h, i) => (
                      <div key={h} className={`h-[14px] whitespace-nowrap tracking-[.06px] ${i === 0 ? "text-[#ff0000]" : ""}`}>
                        {h === "00" ? "ma 21.7. " : "su 20.7. "}
                        <b>{h}:00</b>
                        {i === 0 ? " Havainto" : i === 12 ? " Ennuste" : ""}
                      </div>
                    ))}
                    <b className="mt-3 block">Käynnistä</b>
                    <div className="mt-[31px] flex flex-col gap-1 text-[11px] tracking-[.55px] text-black">
                      {legend.map(([c, t]) => (
                        <div key={c} className="flex h-[19px] items-center gap-[7px]">
                          <span className={`h-[19px] w-[19px] border border-black ${c}`} />
                          <span className="pb-[2px]">{t}</span>
                        </div>
                      ))}
                    </div>
                  </div>
                </div>
              </div>
            </div>
          </div>

          <div className="flex w-[15px] shrink-0 flex-col border-x border-[#a09e9b] bg-[#d3d2d0]">
            <div className="flex h-[14px] items-center justify-center border-b border-[#a09e9b] bg-[#f1f0ef]">
              <svg viewBox="0 0 8 5" className="h-[5px] w-2"><path d="M1 4 4 1 7 4" fill="none" stroke="#999" strokeWidth="1.500" /></svg>
            </div>
            <div className="flex h-[498px] flex-col items-center justify-center gap-[2px] border-y border-[#46699b] bg-gradient-to-r from-[#a8c5ec] to-[#7b9ece]">
              <span className="h-px w-[5px] bg-[#46699b]" /><span className="h-px w-[5px] bg-[#46699b]" /><span className="h-px w-[5px] bg-[#46699b]" />
            </div>
            <div className="mt-auto flex h-[14px] items-center justify-center rounded-b-[3px] border-t border-[#8f8d8a] bg-[#f4f4f3]">
              <svg viewBox="0 0 8 5" className="h-[5px] w-2"><path d="M1 1 4 4 7 1" fill="none" stroke="#222" strokeWidth="1.800" /></svg>
            </div>
          </div>
        </div>
        <div className="h-px shrink-0 bg-[#6f6c68]" />
      </div>

      <div className="absolute left-[136px] top-[107px] flex h-[161px] w-[455px] flex-col border border-[#a5a3a0] bg-[#edecea]">
        <svg viewBox="0 0 20 11" className="absolute left-[5px] top-[-10px] h-[11px] w-5"><path d="M1 10.500 10 1l9 9.500" fill="#edecea" stroke="#8f8d8a" /></svg>
        <div className="flex pl-[14px] pt-[11px]">
          <Question cls="mt-[2px] h-[56px] w-[56px]" />
          <div className="ml-5 whitespace-nowrap text-[13.600px] leading-[17px] tracking-[-.29px]">
            This website (ilmatieteenlaitos.fi) attempted to
            <br />
            access image data on a canvas. Since canvas
            <br />
            image data can be used to discover information
            <br />
            about your computer, blank image data was
            <br />
            returned this time.
          </div>
          <div className="ml-auto mr-[18px] mt-[7px]"><CloseX /></div>
        </div>
        <div className="mb-[13px] mr-[49px] mt-auto flex items-center justify-end gap-[3px]">
          <span className="flex h-[27px] w-[132px] items-center justify-center whitespace-nowrap rounded-[4px] border border-[#8f8d8a] bg-gradient-to-b from-white to-[#ecebe9] pb-[2px] text-[13.600px] tracking-[-.27px]">
            <Menu u="A" b="llow in the Future" />
          </span>
          <Chevron />
        </div>
      </div>

      <div className="absolute left-[4px] top-[886px] flex h-[21px] w-[239px] items-center whitespace-nowrap rounded-tr-[3px] border border-l-0 border-[#c2c0bd] bg-gradient-to-b from-[#f5f5f4] to-[#e6e5e3] pb-px pl-1 text-[13.600px] tracking-[-.23px]">
        ilmatieteenlaitos.fi/pilvet-eurooppa
      </div>

      <svg viewBox="0 0 13 20" className="absolute left-[95px] top-[425px] h-5 w-[13px]">
        <path d="M.7 1v15.500l3.500-3.200 2.600 5.500 2.700-1.200-2.500-5.300h4.800Z" fill="#fff" stroke="#000" strokeWidth="1.200" />
      </svg>
    </div>
  );
}
